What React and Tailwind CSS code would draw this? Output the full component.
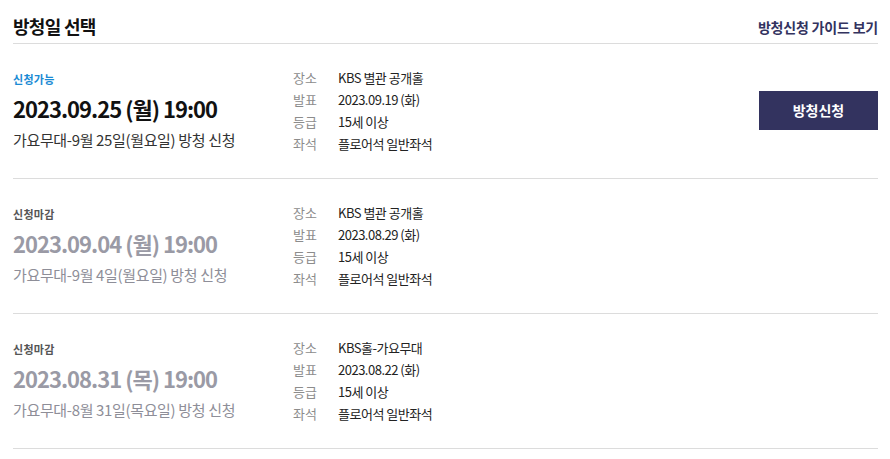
const rows = [
  {
    open: true,
    date: '2023.09.25 (월) 19:00',
    title: '가요무대-9월 25일(월요일) 방청 신청',
    place: 'KBS 별관 공개홀',
    notice: '2023.09.19 (화)',
  },
  {
    open: false,
    date: '2023.09.04 (월) 19:00',
    title: '가요무대-9월 4일(월요일) 방청 신청',
    place: 'KBS 별관 공개홀',
    notice: '2023.08.29 (화)',
  },
  {
    open: false,
    date: '2023.08.31 (목) 19:00',
    title: '가요무대-8월 31일(목요일) 방청 신청',
    place: 'KBS홀-가요무대',
    notice: '2023.08.22 (화)',
  },
];

function Info({ label, value }) {
  return (
    <div className="flex h-[22px] items-center text-[13px]">
      <span className="w-[45px] text-[#8c8c8c]">{label}</span>
      <span className="tracking-[-0.5px] text-[#222]">{value}</span>
    </div>
  );
}

export default function App() {
  return (
    <div
      className="min-h-[459px] bg-white"
      style={{ fontFamily: '"Noto Sans CJK KR", "Noto Sans", sans-serif' }}
    >
      <div className="ml-[13px] w-[865px]">
        <div className="flex h-[44px] items-start justify-between border-b border-[#dcdcdc] pt-[13px]">
          <h2 className="text-[18px] font-bold leading-[26px] tracking-[-0.7px] text-[#111]">방청일 선택</h2>
          <a className="mt-[2px] text-[14px] font-bold leading-[24px] tracking-[-0.2px] text-[#33335f]">방청신청 가이드 보기</a>
        </div>

        {rows.map((r, i) => (
          <div key={i} className="flex h-[135px] items-center border-b border-[#dcdcdc]">
            <div className="w-[280px]">
              <div
                className={
                  'text-[11px] font-bold leading-[16px] tracking-[0.3px] ' +
                  (r.open ? 'text-[#1a8ad4]' : 'text-[#555]')
                }
              >
                {r.open ? '신청가능' : '신청마감'}
              </div>
              <div
                className={
                  'mt-[6px] text-[22px] font-bold leading-[30px] tracking-[-1px] ' +
                  (r.open ? 'text-[#111]' : 'text-[#9a9aa5]')
                }
              >
                {r.date}
              </div>
              <div
                className={
                  'mt-[6px] text-[15px] leading-[22px] tracking-[-0.35px] ' +
                  (r.open ? 'text-[#333]' : 'text-[#8e8e98]')
                }
              >
                {r.title}
              </div>
            </div>
            <div className="w-[280px]">
              <Info label="장소" value={r.place} />
              <Info label="발표" value={r.notice} />
              <Info label="등급" value="15세 이상" />
              <Info label="좌석" value="플로어석 일반좌석" />
            </div>
            <div className="flex flex-1 justify-end">
              {r.open && (
                <button className="mt-[-1px] h-[39px] w-[119px] bg-[#33335f] text-[14px] font-bold text-white">
                  방청신청
                </button>
              )}
            </div>
          </div>
        ))}
      </div>
    </div>
  );
}
